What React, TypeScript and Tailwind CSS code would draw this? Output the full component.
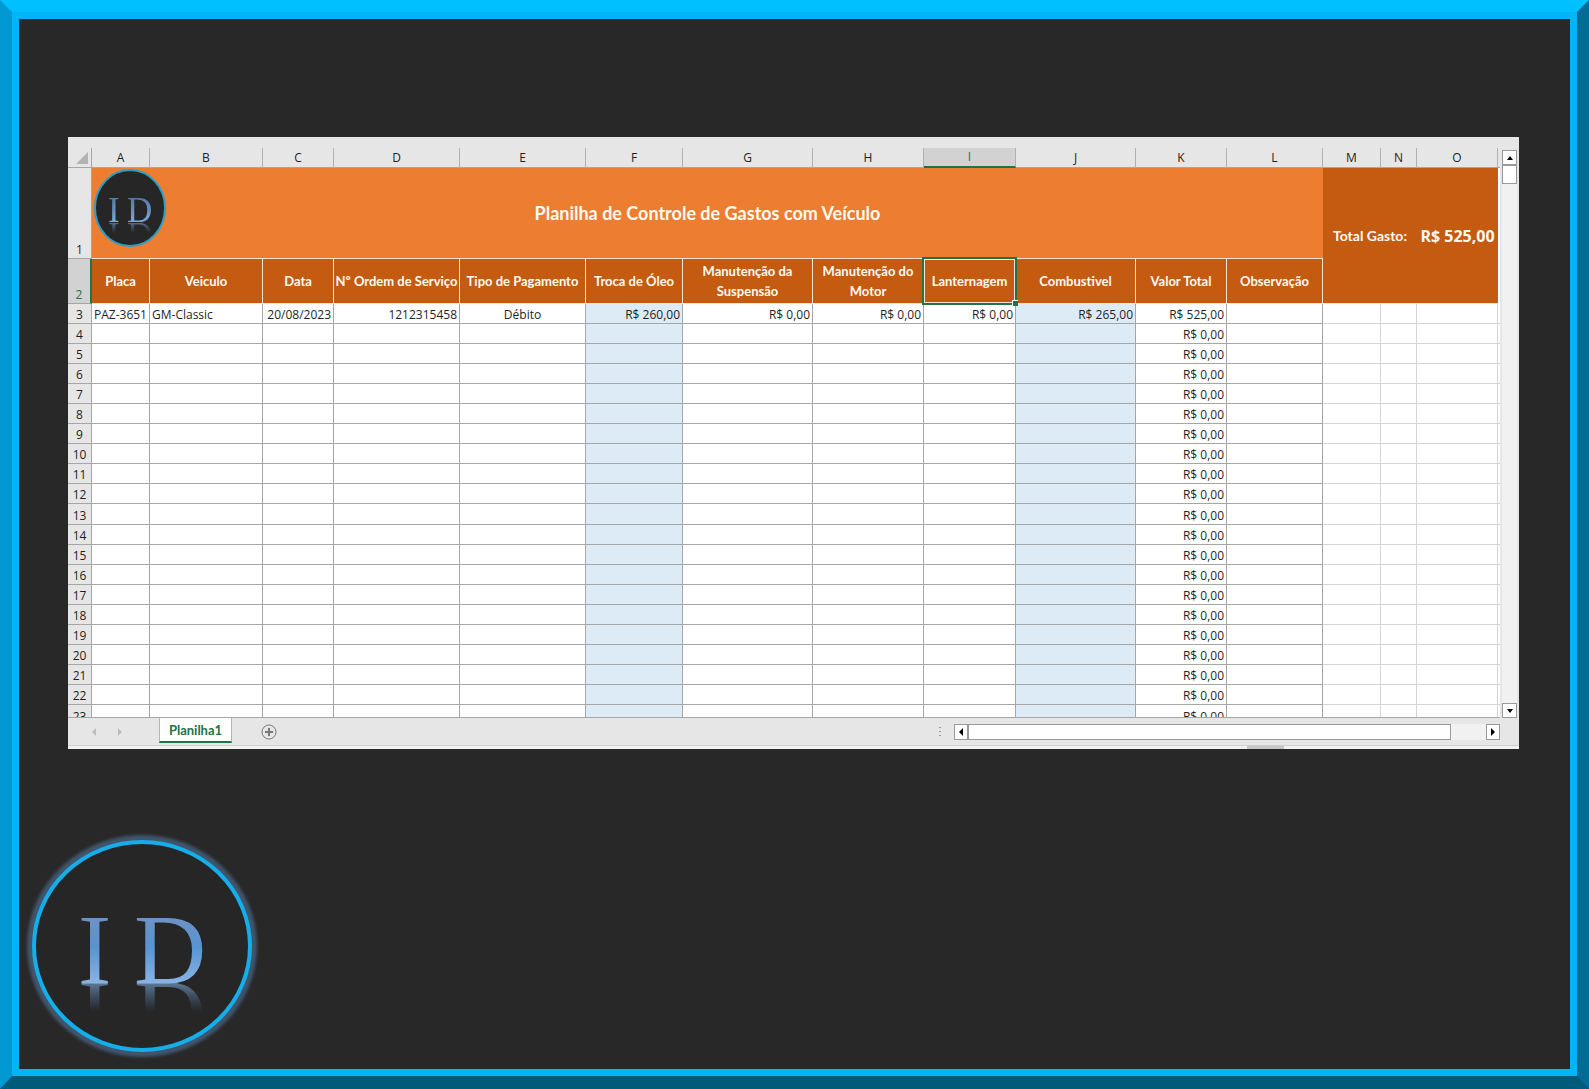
import React from 'react';
import clsx from 'clsx';

interface Column {
  letter: string;
  width: string;
  title?: string;
  value?: string;
  align?: string;
  filled?: boolean;
}

const COLUMNS: Column[] = [
  { letter: 'A', width: 'w-[58px]', title: 'Placa', value: 'PAZ-3651', align: 'text-left' },
  { letter: 'B', width: 'w-[113px]', title: 'Veiculo', value: 'GM-Classic', align: 'text-left' },
  { letter: 'C', width: 'w-[71px]', title: 'Data', value: '20/08/2023', align: 'text-right' },
  { letter: 'D', width: 'w-[126px]', title: 'Nº Ordem de Serviço', value: '1212315458', align: 'text-right' },
  { letter: 'E', width: 'w-[126px]', title: 'Tipo de Pagamento', value: 'Débito', align: 'text-center' },
  { letter: 'F', width: 'w-[97px]', title: 'Troca de Óleo', value: 'R$ 260,00', align: 'text-right', filled: true },
  { letter: 'G', width: 'w-[130px]', title: 'Manutenção da Suspensão', value: 'R$ 0,00', align: 'text-right' },
  { letter: 'H', width: 'w-[111px]', title: 'Manutenção do Motor', value: 'R$ 0,00', align: 'text-right' },
  { letter: 'I', width: 'w-[92px]', title: 'Lanternagem', value: 'R$ 0,00', align: 'text-right' },
  { letter: 'J', width: 'w-[120px]', title: 'Combustivel', value: 'R$ 265,00', align: 'text-right', filled: true },
  { letter: 'K', width: 'w-[91px]', title: 'Valor Total', value: 'R$ 525,00', align: 'text-right' },
  { letter: 'L', width: 'w-[96px]', title: 'Observação' },
  { letter: 'M', width: 'w-[58px]' },
  { letter: 'N', width: 'w-[36px]' },
  { letter: 'O', width: 'w-[81px]' },
];

const ROWS = Array.from({ length: 21 }, (_, i) => i + 3);
const SELECTED = 'I';

const BigLogo = () => (
  <div className="relative w-[240px]">
    <svg width="240" height="232" viewBox="0 0 240 232" aria-hidden="true">
      <defs>
        <filter id="glow" x="-10%" y="-10%" width="120%" height="120%">
          <feGaussianBlur stdDeviation="1.5" />
        </filter>
      </defs>
      <ellipse cx="120" cy="116" rx="111" ry="107" fill="none" stroke="#3f546c" strokeWidth="8" filter="url(#glow)" />
      <ellipse cx="120" cy="116" rx="108" ry="104" fill="#262626" stroke="#14aeea" strokeWidth="4" />
    </svg>
    <svg
      width="130"
      height="70"
      viewBox="0 0 130 70"
      className="absolute top-[84px] left-[56px] [-webkit-box-reflect:below_-2px_linear-gradient(transparent_58%,rgba(0,0,0,0.6))]"
    >
      <defs>
        <linearGradient id="bigFill" gradientUnits="userSpaceOnUse" x1="0" y1="2" x2="0" y2="70">
          <stop offset="0" stopColor="#6f93c4" />
          <stop offset="0.45" stopColor="#5594d2" />
          <stop offset="1" stopColor="#8bb4e6" />
        </linearGradient>
      </defs>
      <g fill="url(#bigFill)" fontFamily="'Liberation Serif', serif" fontSize="100">
        <text x="0" y="69">I</text>
        <text x="56" y="69">D</text>
      </g>
    </svg>
  </div>
);

const SmallLogo = () => (
  <div className="relative w-[76px]">
    <svg width="76" height="82" viewBox="0 0 76 82" aria-hidden="true">
      <ellipse cx="38" cy="40" rx="35" ry="38" fill="#262626" stroke="#2a9fc4" strokeWidth="2" />
    </svg>
    <svg
      width="48"
      height="26"
      viewBox="0 0 48 26"
      className="absolute top-[29px] left-[16px] [-webkit-box-reflect:below_-1px_linear-gradient(transparent_58%,rgba(0,0,0,0.6))]"
    >
      <defs>
        <linearGradient id="smallFill" gradientUnits="userSpaceOnUse" x1="0" y1="0" x2="0" y2="26">
          <stop offset="0" stopColor="#55769f" />
          <stop offset="1" stopColor="#78abe6" />
        </linearGradient>
      </defs>
      <g fill="url(#smallFill)" fontFamily="'Liberation Serif', serif" fontSize="35" fontWeight="400">
        <text x="0" y="25">I</text>
        <text x="19" y="25">D</text>
      </g>
    </svg>
  </div>
);

const Arrow = ({ d }: { d: string }) => (
  <svg width="8" height="8" viewBox="0 0 8 8" className="fill-current" aria-hidden="true">
    <path d={d} />
  </svg>
);

const ARROWS = {
  up: 'M4 2 L7 6 H1 Z',
  down: 'M4 6 L1 2 H7 Z',
  left: 'M2 4 L6 0 V8 Z',
  right: 'M6 4 L2 0 V8 Z',
};

const Grid = () => (
  <table className="w-full table-fixed border-separate border-spacing-0 text-xs leading-4 text-[#1f1f1f]">
    <colgroup>
      <col className="w-[24px]" />
      {COLUMNS.map((c) => (
        <col key={c.letter} className={c.width} />
      ))}
      <col className="w-[2px]" />
    </colgroup>
    <thead>
      <tr className="h-[20px]">
        <th className="border-b border-r border-[#a6a6a6] bg-[#e6e6e6] p-0">
          <svg width="12" height="12" viewBox="0 0 12 12" className="ml-2 fill-[#b3b3b3]" aria-hidden="true">
            <path d="M12 0 V12 H0 Z" />
          </svg>
        </th>
        {COLUMNS.map((c) => (
          <th
            key={c.letter}
            scope="col"
            className={clsx(
              'border-r border-r-[#b0b0b0] p-0 font-normal',
              c.letter === SELECTED
                ? 'border-b-2 border-b-[#217346] bg-[#d2d2d2] text-[#217346]'
                : 'border-b border-b-[#a6a6a6] bg-[#e6e6e6]'
            )}
          >
            {c.letter}
          </th>
        ))}
        <th className="border-b border-[#a6a6a6] bg-[#e6e6e6] p-0" />
      </tr>
    </thead>
    <tbody>
      <tr className="h-[91px]">
        <th scope="row" className="border-b border-r border-[#a6a6a6] bg-[#e6e6e6] p-0 align-bottom font-normal">1</th>
        <td colSpan={12} className="relative border-b border-[#fbe5d6] bg-[#ed7d31] p-0 text-center font-['Lato','Open_Sans',sans-serif] text-lg font-bold text-[#fffaf0]">
          <div className="absolute left-0 top-0">
            <SmallLogo />
          </div>
          Planilha de Controle de Gastos com Veículo
        </td>
        <td colSpan={2} rowSpan={2} className="border-b border-[#fbe5d6] bg-[#c55a11] p-0 text-center font-['Lato','Open_Sans',sans-serif] text-sm font-bold text-[#fffaf0]">
          Total Gasto:
        </td>
        <td rowSpan={2} className="whitespace-nowrap border-b border-[#fbe5d6] bg-[#c55a11] p-0 text-center text-base font-bold text-[#fffaf0]">
          R$ 525,00
        </td>
        <td className="p-0" />
      </tr>
      <tr className="h-[45px]">
        <th scope="row" className="border-b border-r-2 border-b-[#a6a6a6] border-r-[#217346] bg-[#d2d2d2] p-0 align-bottom font-normal text-[#217346]">2</th>
        {COLUMNS.slice(0, 12).map((c) => (
          <th
            key={c.letter}
            className="relative border-b border-r border-[#fbe5d6] bg-[#c55a11] p-0 font-['Lato','Open_Sans',sans-serif] text-[13px] leading-5 font-bold text-[#fffaf0]"
          >
            {c.title}
            {c.letter === SELECTED && (
              <span className="absolute -inset-0.5 z-10 border-2 border-[#217346] shadow-[inset_0_0_0_1px_#fbe5d6]">
                <span className="absolute -right-[3px] -bottom-[3px] size-[6px] border-t border-l border-white bg-[#217346]" />
              </span>
            )}
          </th>
        ))}
        <td className="p-0" />
      </tr>
      {ROWS.map((row) => (
        <tr key={row} className={row % 10 === 3 && row > 3 ? 'h-[21px]' : 'h-[20px]'}>
          <th scope="row" className="border-b border-r border-[#a6a6a6] bg-[#e6e6e6] px-0 pt-[3px] pb-0 font-normal">{row}</th>
          {COLUMNS.map((c) => (
            <td
              key={c.letter}
              className={clsx(
                'whitespace-nowrap border-b border-r px-0.5 pt-[3px] pb-0',
                c.title ? 'border-[#a6a6a6]' : 'border-[#d4d4d4]',
                c.filled ? 'bg-[#ddebf7]' : 'bg-white',
                c.align
              )}
            >
              {row === 3 ? c.value : c.letter === 'K' ? 'R$ 0,00' : null}
            </td>
          ))}
          <td className="border-b border-[#d4d4d4] p-0" />
        </tr>
      ))}
    </tbody>
  </table>
);

const VerticalScroll = () => (
  <div className="mt-0.5 ml-0.5 flex w-[15px] flex-col bg-[#f1f1f1]">
    <button aria-label="Rolar para cima" className="flex h-[15px] items-center justify-center border border-[#999] bg-white text-black">
      <Arrow d={ARROWS.up} />
    </button>
    <div className="h-[19px] border border-[#999] bg-white" />
    <button aria-label="Rolar para baixo" className="mt-auto flex h-[15px] items-center justify-center border border-[#999] bg-white text-black">
      <Arrow d={ARROWS.down} />
    </button>
  </div>
);

const SheetBar = () => (
  <div className="flex h-[28px] border-b border-[#cfcfcf] pr-[19px]">
    <div className="flex w-[91px] items-center gap-[18px] pl-[22px] text-[#bdbdbd]">
      <button aria-label="Planilha anterior"><Arrow d={ARROWS.left} /></button>
      <button aria-label="Próxima planilha"><Arrow d={ARROWS.right} /></button>
    </div>
    <button className="h-[25px] w-[73px] border-x border-b-2 border-x-[#b5b5b5] border-b-[#217346] bg-white pt-0.5 font-['Lato','Open_Sans',sans-serif] text-[13px] font-bold text-[#217346]">
      Planilha1
    </button>
    <button aria-label="Nova planilha" className="ml-[29px] text-[#777]">
      <svg width="16" height="16" viewBox="0 0 16 16" fill="none" stroke="currentColor" aria-hidden="true">
        <circle cx="8" cy="8" r="7" />
        <path d="M8 4 V12 M4 8 H12" strokeWidth="2" />
      </svg>
    </button>
    <div className="ml-auto flex w-[562px] items-center">
      <svg width="4" height="12" viewBox="0 0 4 12" className="mr-[12px] fill-[#999]" aria-hidden="true">
        <path d="M1 1h2v1H1z M1 5h2v1H1z M1 9h2v1H1z" />
      </svg>
      <div className="flex h-[16px] flex-1 bg-[#f1f1f1]">
        <button aria-label="Rolar para a esquerda" className="flex w-[14px] items-center justify-center border border-[#999] bg-white text-black">
          <Arrow d={ARROWS.left} />
        </button>
        <div className="mr-[35px] flex-1 border border-[#999] bg-white" />
        <button aria-label="Rolar para a direita" className="flex w-[14px] items-center justify-center border border-[#999] bg-white text-black">
          <Arrow d={ARROWS.right} />
        </button>
      </div>
    </div>
  </div>
);

export default function App() {
  return (
    <div className="flex min-h-screen border-12 border-b-[13px] border-t-[#00c0ff] border-r-[#006b94] border-b-[#005a7a] border-l-[#0099d4] font-['Open_Sans','Noto_Sans',sans-serif]">
      <main className="flex flex-1 flex-col justify-between border-[7px] border-[#00b4f8] bg-[#282828]">
        <section className="mt-[118px] mr-[51px] ml-[49px] bg-[#e6e6e6] pt-[11px]">
          <div className="flex">
            <div className="h-[570px] min-w-0 flex-1 overflow-hidden border-b border-[#a6a6a6] bg-white">
              <Grid />
            </div>
            <VerticalScroll />
            <div className="w-0.5" />
          </div>
          <SheetBar />
          <div className="flex h-[3px] justify-end bg-[#f1f1f1] pr-[235px]">
            <div className="w-[37px] bg-[#c6c6c6]" />
          </div>
        </section>
        <div className="mb-[7px] ml-[3px]">
          <BigLogo />
        </div>
      </main>
    </div>
  );
}
